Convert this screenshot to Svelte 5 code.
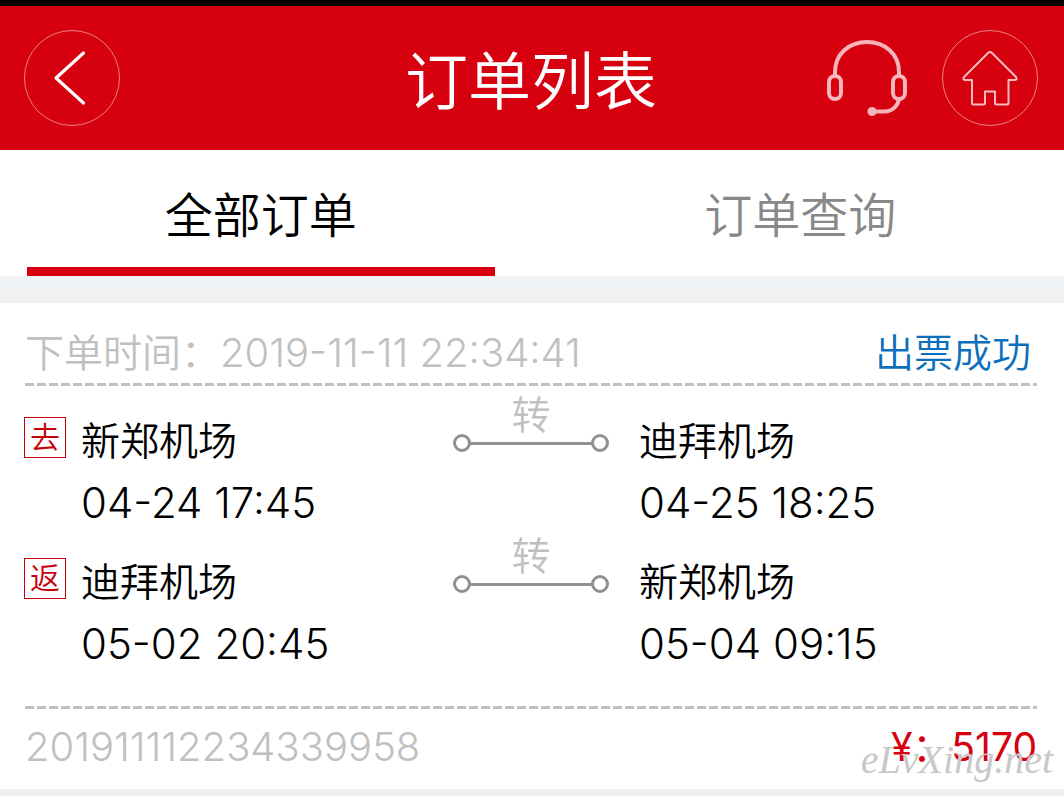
<script>
  let activeTab = 'all';

  const tabs = [
    { id: 'all', label: '全部订单' },
    { id: 'search', label: '订单查询' },
  ];

  const order = {
    id: '201911112234339958',
    createdAt: '2019-11-11 22:34:41',
    status: '出票成功',
    price: 5170,
    legs: [
      { type: '去', from: '新郑机场', departure: '04-24 17:45', to: '迪拜机场', arrival: '04-25 18:25' },
      { type: '返', from: '迪拜机场', departure: '05-02 20:45', to: '新郑机场', arrival: '05-04 09:15' },
    ],
  };
</script>

<div class="page">
  <header>
    <div class="side">
      <button class="round" aria-label="返回">
        <svg width="94" height="94" viewBox="0 0 94 94">
          <path d="M58.5 22 L31 47 L58.5 72" fill="none" stroke="#fff" stroke-width="3.2" stroke-linecap="round" stroke-linejoin="round" />
        </svg>
      </button>
    </div>
    <h1>订单列表</h1>
    <div class="side right">
      <button class="service" aria-label="客服">
        <svg width="82" height="78" viewBox="0 0 82 78" fill="none" stroke="#f5b5ba" stroke-width="4">
          <path d="M9 36 V33 C9 15 23 3 41 3 S73 15 73 33 V36" />
          <rect x="3" y="37" width="12" height="23" rx="6" />
          <rect x="67" y="37" width="12" height="23" rx="6" />
          <path d="M73 60 C72 67 66 72.500 59 72.500 H46" />
          <circle cx="46" cy="72.500" r="4.500" fill="#f5b5ba" stroke="none" />
        </svg>
      </button>
      <button class="round" aria-label="首页">
        <svg width="94" height="94" viewBox="0 0 94 94">
          <path d="M47 21 Q48 21 49 22 L73 46 Q74.500 49 72 49 H65.500 V72 Q65.500 73.500 64 73.500 H53.500 Q52 73.500 52 72 V60.500 H42 V72 Q42 73.500 40.500 73.500 H30.500 Q29 73.500 29 72 V49 H22 Q19.500 49 21 46 L45 22 Q46 21 47 21 Z" fill="none" stroke="#f7bcc1" stroke-width="2" stroke-linejoin="round" />
        </svg>
      </button>
    </div>
  </header>

  <nav>
    {#each tabs as tab}
      <button class:active={activeTab === tab.id} on:click={() => (activeTab = tab.id)}>{tab.label}</button>
    {/each}
  </nav>

  <main>
    <article>
      <div class="row">
        <span class="muted">下单时间：<time>{order.createdAt}</time></span>
        <span class="status">{order.status}</span>
      </div>
      <div class="legs">
        {#each order.legs as leg}
          <section class="leg">
            <span class="badge">{leg.type}</span>
            <div class="stop">
              <div class="name">{leg.from}</div>
              <div class="time">{leg.departure}</div>
            </div>
            <div class="transfer">
              <span>转</span>
              <div class="line"></div>
            </div>
            <div class="stop">
              <div class="name">{leg.to}</div>
              <div class="time">{leg.arrival}</div>
            </div>
          </section>
        {/each}
      </div>
      <div class="row bottom">
        <span class="muted number">{order.id}</span>
        <span class="price">¥：{order.price}</span>
        <span class="watermark">eLvXing.net</span>
      </div>
    </article>
  </main>
</div>

<style>
  :global(body) {
    margin: 0;
    background: #f0f0f0;
  }

  .page {
    font-family: Inter, "Noto Sans CJK SC", sans-serif;
    font-size: 39px;
    font-weight: 350;
    color: #000;
  }

  header {
    display: flex;
    align-items: center;
    height: 144px;
    padding: 0 26px 0 24px;
    border-top: 6px solid #000;
    background: #d7000f;
  }

  h1 {
    margin: 0;
    padding-top: 6px;
    font-size: 63px;
    font-weight: 350;
    line-height: 72px;
    color: #fff;
  }

  .side {
    display: flex;
    flex: 1;
    align-items: center;
  }

  .right {
    justify-content: flex-end;
    gap: 34px;
  }

  button {
    padding: 0;
    border: none;
    background: none;
    font: inherit;
    cursor: pointer;
  }

  button svg {
    display: block;
  }

  .round {
    border: 1px solid #eb8087;
    border-radius: 50%;
  }

  nav {
    display: grid;
    grid-template-columns: 1fr 1fr;
    gap: 72px;
    padding: 0 30px 0 27px;
    background: #fff;
  }

  nav button {
    height: 126px;
    padding-top: 6px;
    border-bottom: 9px solid transparent;
    font-size: 48px;
    color: #888;
  }

  nav .active {
    border-color: #d7000f;
    color: #000;
  }

  main {
    border-top: 15px solid #eff3f5;
    padding-top: 12px;
  }

  article {
    padding: 0 27px 0 25px;
    background: #fff;
  }

  .row {
    display: flex;
    justify-content: space-between;
    padding-top: 20px;
    line-height: 60px;
  }

  .muted {
    color: #c0c0c0;
  }

  .muted time,
  .number {
    font-size: 40px;
  }

  .status {
    padding-right: 6px;
    color: #0b6fbc;
  }

  .legs {
    display: grid;
    gap: 17px;
    padding: 27px 0 34px;
    background:
      repeating-linear-gradient(90deg, #c0c0c0 0 9px, #fff 9px 12px) top / 100% 3px no-repeat,
      repeating-linear-gradient(90deg, #c0c0c0 0 9px, #fff 9px 12px) bottom / 100% 3px no-repeat;
  }

  .leg {
    display: grid;
    grid-template-columns: 56px 372fr 156px 428fr;
    align-items: start;
  }

  .badge {
    width: 40px;
    margin: 7px 0 0 -1px;
    border: 1px solid #c7000b;
    font-size: 30px;
    line-height: 39px;
    text-align: center;
    color: #c7000b;
  }

  .name,
  .time {
    line-height: 62px;
  }

  .time {
    font-size: 42px;
  }

  .transfer + .stop {
    padding-left: 30px;
  }

  .transfer {
    margin-top: -20px;
    text-align: center;
    line-height: 50px;
    color: #c0c0c0;
  }

  .transfer span {
    display: block;
  }

  .line {
    display: flex;
    justify-content: space-between;
    margin-top: -6px;
    background: linear-gradient(#919191, #919191) center / calc(100% - 34px) 3px no-repeat;
  }

  .line::before,
  .line::after {
    content: "";
    width: 12px;
    height: 12px;
    border: 3px solid #919191;
    border-radius: 50%;
  }

  .bottom {
    position: relative;
    padding: 8px 0 12px;
  }

  .price {
    font-weight: 400;
    color: #d7000f;
  }

  .watermark {
    position: absolute;
    right: -16px;
    bottom: 6px;
    font: italic 40px "Liberation Serif", serif;
    color: #c8c8c8;
  }
</style>
